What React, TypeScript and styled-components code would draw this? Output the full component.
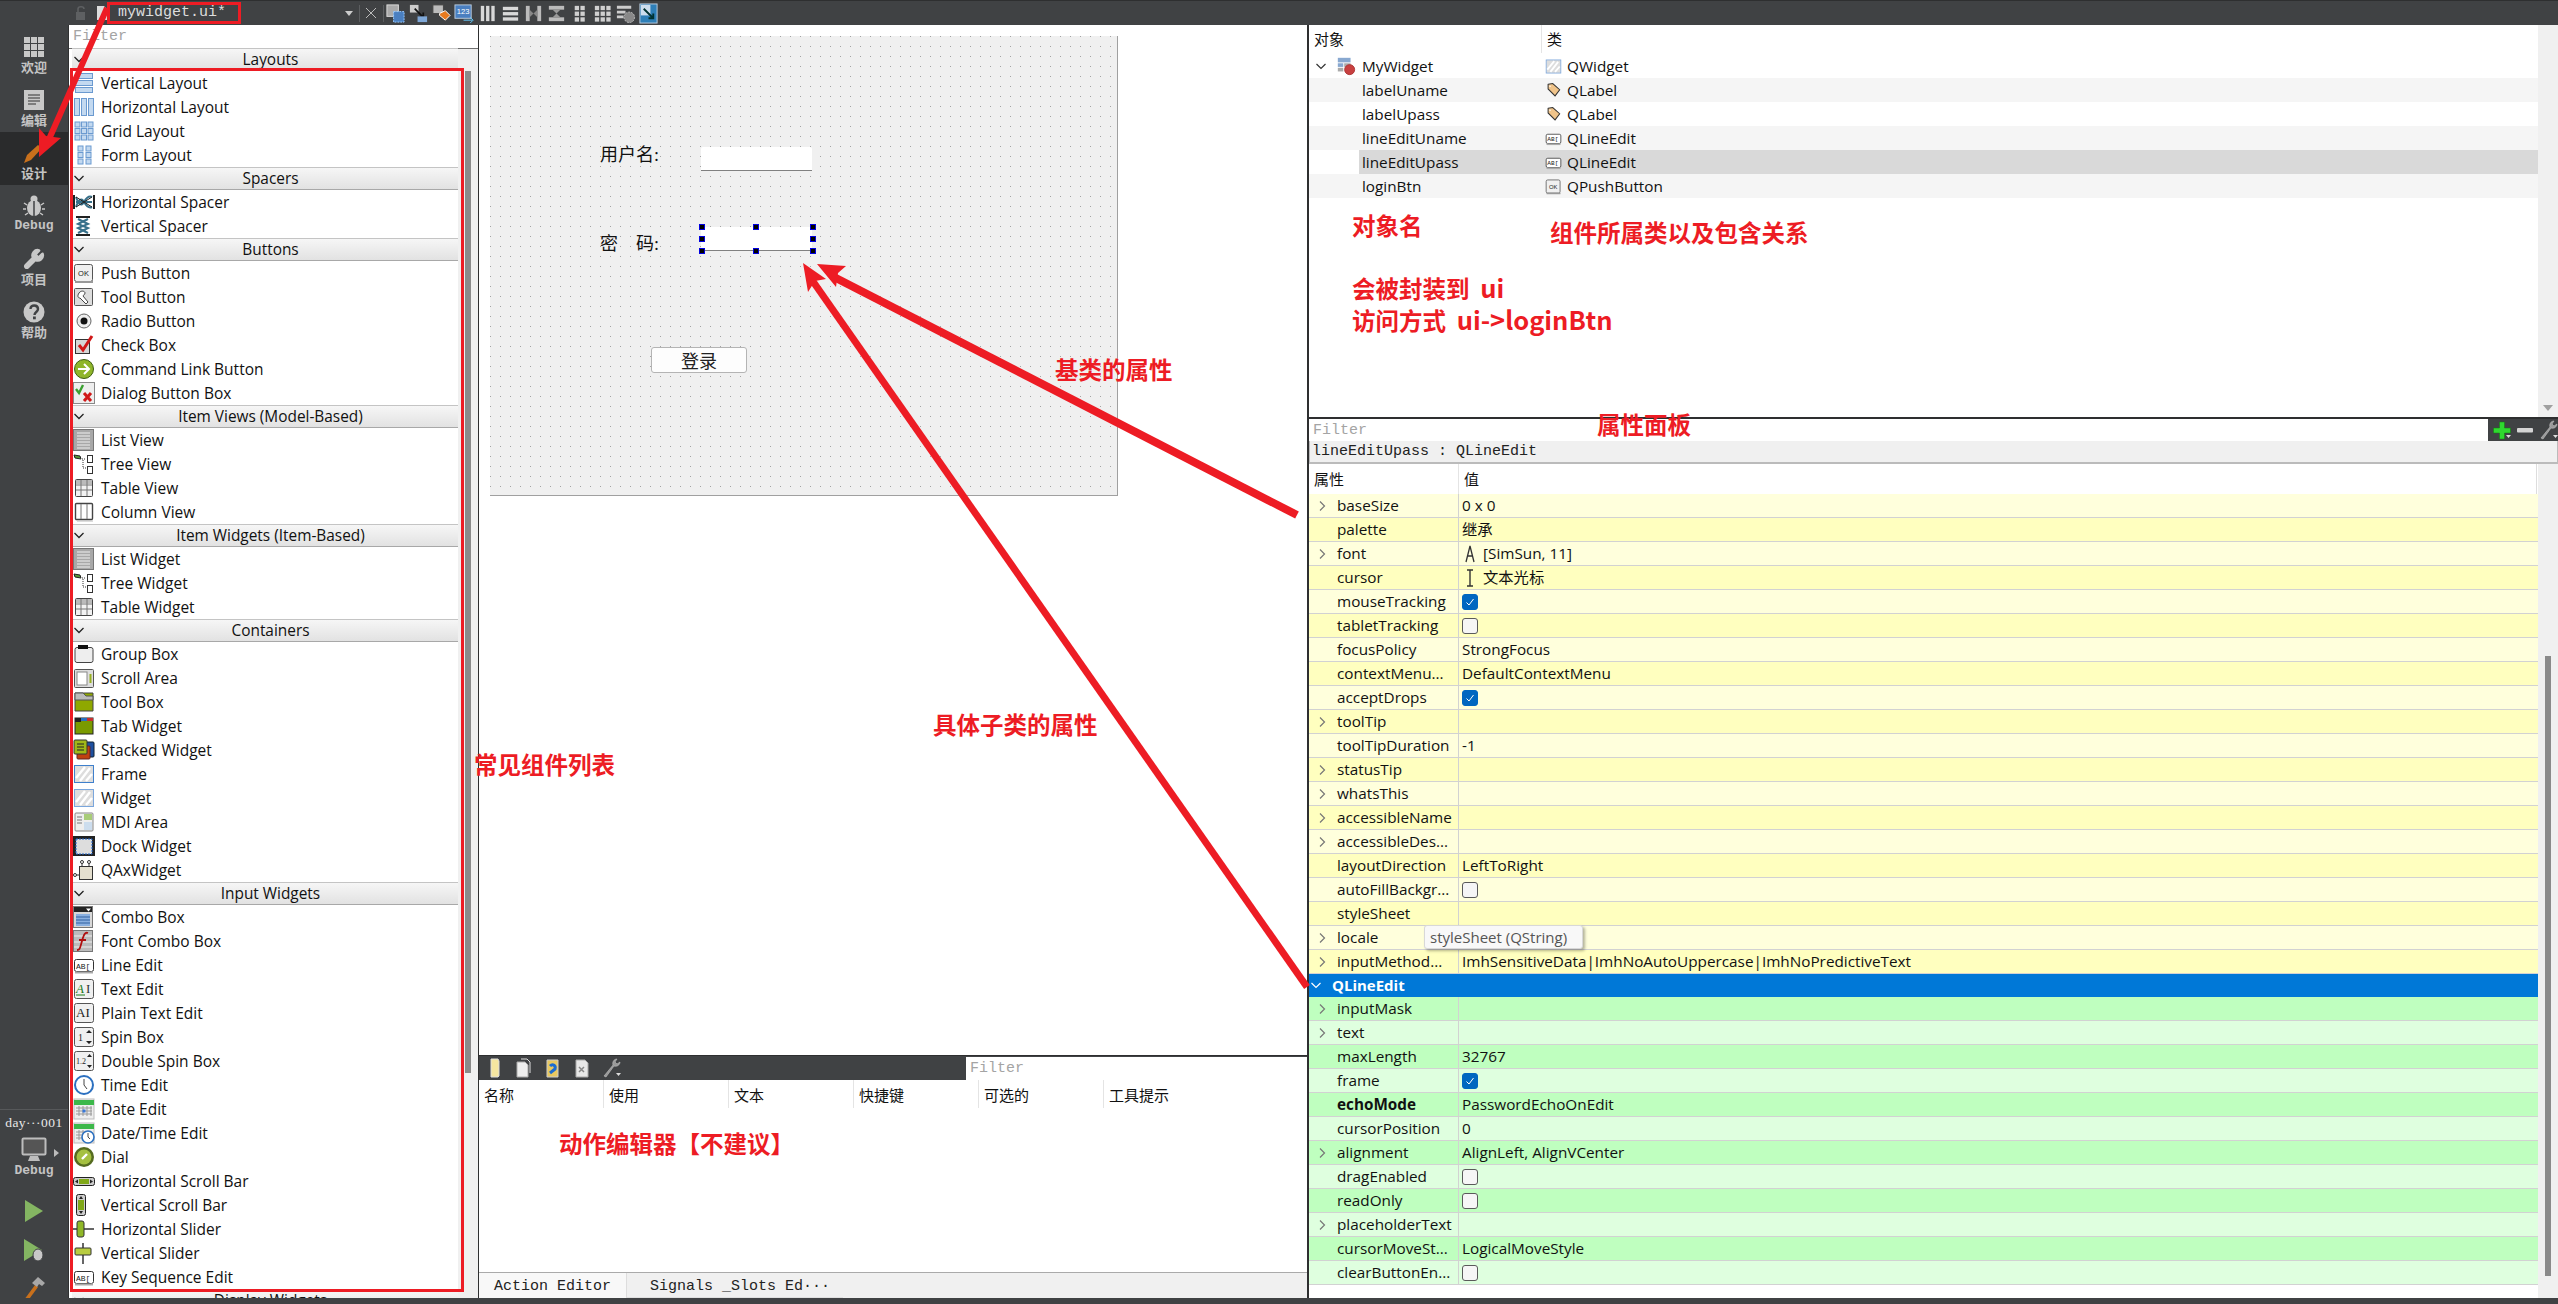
import React from "react";
import styled, { createGlobalStyle } from "styled-components";
import { Wrench } from "lucide-react";

const UI = `"Open Sans", "Noto Sans CJK SC", sans-serif`;
const MONO = `"Liberation Mono", "Noto Sans CJK SC", monospace`;
const CJK = `"Noto Sans CJK SC", "Open Sans", sans-serif`;
const SERIF = `"Liberation Serif", "Noto Sans CJK SC", serif`;
const RED = "#ed1c24";

const Global = createGlobalStyle`
  html, body { margin: 0; padding: 0; background: #404244; }
  * { box-sizing: border-box; }
`;

const Root = styled.div`
  position: relative; width: 2558px; height: 1304px; overflow: hidden;
  display: flex; flex-direction: column; background: #404244; font-family: ${UI}; color: #111;
`;
const TopBar = styled.div`
  height: 25px; flex: none; display: flex; align-items: center; padding-left: 75px;
  background: #404244; border-top: 1px solid #2e2f30;
`;
const Title = styled.div`
  width: 134px; height: 22px; margin-left: 0; border: 3px solid ${RED};
  font: 15px/16px ${MONO}; color: #ddd; padding-left: 8px;
`;
const TopGap = styled.span`display: inline-block; width: ${(p: { $w: number }) => p.$w}px; flex: none;`;
const DropCaret = styled.span`
  width: 0; height: 0; border: 4px solid transparent; border-top: 5px solid #ccc; border-bottom: 0; flex: none;
`;
const TopDivider = styled.span`width: 1px; height: 17px; background: #5c5e60; flex: none;`;
const ToolSlot = styled.span`width: 23px; height: 22px; display: flex; align-items: center; justify-content: center; flex: none;`;

const Main = styled.div`flex: 1; min-height: 0; display: flex;`;
const BottomStrip = styled.div`height: 6px; flex: none; background: #404244;`;

/* sidebar */
const Sidebar = styled.div`
  width: 69px; flex: none; display: flex; flex-direction: column; padding-top: 1px;
  background: #404244; border-right: 1px solid #303132;
`;
const ModeTab = styled.div<{ $on?: boolean }>`
  height: 53px; flex: none; display: flex; flex-direction: column; align-items: center; justify-content: flex-start;
  padding-top: 10px; background: ${(p) => (p.$on ? "#2a2b2c" : "transparent")};
`;
const ModeLabel = styled.div<{ $mono?: boolean }>`
  margin-top: 1px; font: bold 13px/16px ${(p) => (p.$mono ? MONO : CJK)}; color: #c4c4c4;
`;
const SideBottom = styled.div`
  margin-top: auto; height: 189px; border-top: 1px solid #56585a; display: flex; flex-direction: column; align-items: center;
`;
const KitName = styled.div`font: 13.5px/16px ${SERIF}; color: #e8e8e8; margin-top: 5px; letter-spacing: .5px;`;
const KitMonitor = styled.div`position: relative; margin-top: 6px; width: 68px; display: flex; justify-content: center;`;
const KitCaret = styled.span`
  position: absolute; left: 54px; top: 12px; width: 0; height: 0;
  border: 4px solid transparent; border-left: 5px solid #bbb; border-right: 0;
`;
const RunBtn = styled.div<{ $top: number }>`
  height: 24px; margin-top: ${(p) => p.$top}px; display: flex; align-items: center; justify-content: center; flex: none;
`;

/* widget box */
const LeftPanel = styled.div`width: 409px; flex: none; display: flex; flex-direction: column; background: #fff;`;
const FilterInput = styled.div<{ $w?: number }>`
  height: 23px; flex: ${(p) => (p.$w ? "none" : "1")}; ${(p) => (p.$w ? `width:${p.$w}px;` : "")}
  background: #fff; font: 15px/23px ${MONO}; color: #a4a4a4; padding-left: 4px; min-width: 0;
`;
const LeftFilterRow = styled.div`display: flex; flex: none; border-bottom: 1px solid #707070;`;
const BoxBody = styled.div`flex: 1; min-height: 0; display: flex;`;
const BoxList = styled.div`flex: 1; min-width: 0; overflow: hidden; padding-left: 3px; margin-top: -1px;`;
const Category = styled.div`
  position: relative; height: 23px; display: flex; align-items: center; justify-content: center; padding-left: 11px;
  font-size: 15.4px; background: linear-gradient(#f6f6f6, #e2e2e2); border-bottom: 1px solid #a8a8a8; border-top: 1px solid #c4c4c4;
`;
const CatChevron = styled.svg`position: absolute; left: 1px; top: 4px;`;
const Item = styled.div`
  height: 24px; display: flex; align-items: center; gap: 6px; padding-left: 1px; font-size: 15.5px; white-space: nowrap;
`;
const ScrollTrack = styled.div`
  width: 20px; flex: none; background: #f0f0f0; position: relative;
`;
const ScrollThumb = styled.div<{ $top: number; $h: number }>`
  position: absolute; left: 7px; width: 6px; top: ${(p) => p.$top}px; height: ${(p) => p.$h}px; background: #8a8a8a;
`;
const DownArrow = styled.span`
  position: absolute; left: 5px; bottom: 6px; width: 0; height: 0;
  border: 5px solid transparent; border-top: 6px solid #a0a0a0; border-bottom: 0;
`;

/* center */
const Splitter = styled.div<{ $w: number }>`width: ${(p) => p.$w}px; flex: none; background: #2e2f30;`;
const Center = styled.div`width: 828px; flex: none; display: flex; flex-direction: column; background: #fff;`;
const Canvas = styled.div`height: 1030px; flex: none; padding: 11px 0 0 11px;`;
const Form = styled.div`
  position: relative; width: 628px; height: 460px;
  background-color: #f0f0f0;
  border-right: 1px solid #a0a0a0; border-bottom: 1px solid #a0a0a0;
  &::before {
    content: ""; position: absolute; inset: 0;
    background: linear-gradient(to right, #a4a4a4 1px, transparent 1px) 0 0 / 10px 10px;
    -webkit-mask: linear-gradient(to bottom, #000 1px, transparent 1px) 0 0 / 10px 10px;
    mask: linear-gradient(to bottom, #000 1px, transparent 1px) 0 0 / 10px 10px;
  }
`;
const FormLabel = styled.div<{ $x: number; $y: number }>`
  position: absolute; left: ${(p) => p.$x}px; top: ${(p) => p.$y}px; font: 18px/24px ${SERIF}; color: #111; white-space: pre;
`;
const LineEdit = styled.div<{ $x: number; $y: number }>`
  position: absolute; left: ${(p) => p.$x}px; top: ${(p) => p.$y}px; width: 111px; height: 24px;
  background: #fff; border-bottom: 1px solid #808080; border-radius: 2px 2px 0 0;
`;
const Handle = styled.div<{ $x: number; $y: number }>`
  position: absolute; left: ${(p) => p.$x}px; top: ${(p) => p.$y}px; width: 6px; height: 6px;
  background: #000; border: 1px solid #0000e0;
`;
const FormButton = styled.div`
  position: absolute; left: 161px; top: 311px; width: 96px; height: 26px; background: #fdfdfd; border: 1px solid #b4b4b4; border-radius: 3px;
  display: flex; align-items: center; justify-content: center; font: 18px ${SERIF}; color: #222;
`;
const ActionBar = styled.div`
  height: 25px; flex: none; display: flex; align-items: center; background: #404244; border-top: 1px solid #2e2f30; padding-left: 5px;
`;
const ActionTools = styled.div`flex: 1; display: flex; align-items: center; gap: 7px;`;
const ColumnHeader = styled.div`height: 29px; flex: none; display: flex;`;
const ColHead = styled.div`
  width: 125px; flex: none; border-right: 1px solid #e4e4e4; font: 15px/29px ${CJK}; padding-left: 5px; height: 28px;
  &:last-child { border-right: 0; }
`;
const ActionBody = styled.div`flex: 1;`;
const Tabs = styled.div`
  height: 26px; flex: none; display: flex; background: #f0f0f0; border-top: 1px solid #aaa;
`;
const TabItem = styled.div<{ $on?: boolean; $w: number }>`
  width: ${(p) => p.$w}px; font: 15px/27px ${MONO}; padding-left: ${(p) => (p.$on ? 15 : 23)}px; color: #222; white-space: pre;
  background: ${(p) => (p.$on ? "#f8f8f8" : "#f0f0f0")}; ${(p) => (p.$on ? "border-right: 1px solid #ddd;" : "border-bottom: 1px solid #e0e0e0;")}
`;

/* right */
const Right = styled.div`flex: 1; min-width: 0; display: flex; flex-direction: column; background: #fff;`;
const ObjectArea = styled.div`height: 392px; flex: none; display: flex;`;
const ObjectTree = styled.div`flex: 1; min-width: 0;`;
const TreeHead = styled.div`height: 29px; display: grid; grid-template-columns: 233px 1fr; font: 15px/28px ${CJK};`;
const TreeHeadCell = styled.div`padding-left: 5px; height: 28px; &:first-child { border-right: 1px solid #e4e4e4; }`;
const TreeRow = styled.div<{ $alt?: boolean }>`
  height: 24px; display: grid; grid-template-columns: 50px 183px 1fr; font-size: 15.3px; line-height: 24px;
  background: ${(p) => (p.$alt ? "#f5f5f5" : "#fff")}; white-space: nowrap;
`;
const TreeIndent = styled.div`display: flex; align-items: center; padding-left: 6px; gap: 9px;`;
const TreeName = styled.div<{ $sel?: boolean }>`
  padding-left: 3px; background: ${(p) => (p.$sel ? "#d9d9d9" : "transparent")};
`;
const TreeClass = styled.div<{ $sel?: boolean }>`
  display: flex; align-items: center; gap: 5px; padding-left: 3px; background: ${(p) => (p.$sel ? "#d9d9d9" : "transparent")};
`;
const FilterRow = styled.div`
  height: 24px; flex: none; display: flex; border-top: 2px solid #2e2f30; border-bottom: 1px solid #404244; background: #404244;
`;
const FilterTools = styled.div`width: 70px; flex: none; display: flex; align-items: center; padding-left: 3px; gap: 1px;`;
const ObjTitle = styled.div`
  height: 23px; flex: none; background: #f0f0f0; border: 1px solid #bbb; border-top: 0;
  font: 15px/21px ${MONO}; padding-left: 2px; color: #222; border-bottom-width: 2px;
`;
const PropArea = styled.div`flex: 1; min-height: 0; display: flex;`;
const PropTable = styled.div`flex: 1; min-width: 0;`;
const PropHead = styled.div`
  height: 30px; display: grid; grid-template-columns: 150px 1fr; font: 15px/30px ${CJK}; border-right: 1px solid #ddd; margin-right: 1px;
`;
const PropHeadCell = styled.div`padding-left: 5px; &:first-child { border-right: 1px solid #e4e4e4; }`;
const PropRow = styled.div<{ $bg: string }>`
  height: 24px; display: grid; grid-template-columns: 150px 1fr; background: ${(p) => p.$bg};
  border-bottom: 1px solid #d2d2d2; font-size: 15.3px; line-height: 23px; white-space: nowrap;
`;
const PropName = styled.div<{ $bold?: boolean }>`
  position: relative; padding-left: 28px; border-right: 1px solid #d2d2d2; overflow: hidden; font-weight: ${(p) => (p.$bold ? 700 : 400)};
`;
const PropChevron = styled.svg`position: absolute; left: 7px; top: 6px;`;
const PropValue = styled.div`padding-left: 3px; display: flex; align-items: center; gap: 5px;`;
const GroupRow = styled.div`
  position: relative; height: 23px; background: #0078d7; color: #fff; font: 700 15px/22px ${UI}; padding-left: 23px;
`;
const Check = styled.span<{ $on?: boolean }>`
  width: 16px; height: 16px; flex: none; border-radius: 3px; display: inline-flex; align-items: center; justify-content: center;
  background: ${(p) => (p.$on ? "#0067c0" : "#f6f6f6")}; border: 1px solid ${(p) => (p.$on ? "#0067c0" : "#5a5a5a")};
`;
const Tip = styled.div`
  position: absolute; left: 1424px; top: 925px; width: 159px; height: 24px; background: #f8f8f8; border: 1px solid #d8d8d8; border-radius: 3px;
  font: 15px/22px ${UI}; color: #555; padding-left: 5px; box-shadow: 2px 2px 3px rgba(0,0,0,.3); white-space: nowrap;
`;

/* overlay annotations */
const Overlay = styled.svg`position: absolute; left: 0; top: 0; pointer-events: none;`;
const RedFrame = styled.div`
  position: absolute; left: 70px; top: 68px; width: 394px; height: 1224px; border: 3px solid ${RED}; pointer-events: none;
`;
const Note = styled.div<{ $x: number; $y: number }>`
  position: absolute; left: ${(p) => p.$x}px; top: ${(p) => p.$y}px; color: ${RED}; white-space: pre;
  font: 700 23.5px/32px ${CJK};
`;
const NoteLatin = styled.span`font-size: 25.5px;`;

/* ---------- drawn icons ---------- */
const icons: Record<string, React.ReactNode> = {
  vlayout: <g fill="#c3d9f0" stroke="#6b9ad0"><rect x="2.5" y="1.5" width="17" height="5" /><rect x="2.5" y="8.5" width="17" height="5" /><rect x="2.5" y="15.5" width="17" height="5" /></g>,
  hlayout: <g fill="#c3d9f0" stroke="#6b9ad0"><rect x="1.5" y="2.5" width="5" height="17" /><rect x="8.5" y="2.5" width="5" height="17" /><rect x="15.5" y="2.5" width="5" height="17" /></g>,
  grid: <g fill="#c3d9f0" stroke="#6b9ad0">{[2, 8.5, 15].map((x) => [2, 8.5, 15].map((y) => <rect key={x + "-" + y} x={x} y={y} width="5" height="5" />))}</g>,
  form: <g fill="#c3d9f0" stroke="#6b9ad0">{[5, 13].map((x) => [2, 8.5, 15].map((y) => <rect key={x + "-" + y} x={x} y={y} width="5" height="5" />))}</g>,
  hspacer: <g><path d="M1 4v14M21 4v14" stroke="#222" strokeWidth="2" /><path d="M3 6q4 12 8 5t8-5M3 16q4-12 8-5t8 5M3 11h16" stroke="#37708a" strokeWidth="2" fill="none" /><path d="M3 6l16 10M3 16L19 6" stroke="#222" /></g>,
  vspacer: <g><path d="M3 2h14M3 20h14" stroke="#222" strokeWidth="2" /><path d="M5 4l10 5-10 4 10 5M15 4L5 9l10 4-10 5" stroke="#37708a" strokeWidth="2" fill="none" /></g>,
  push: <g><rect x="1.5" y="2.5" width="18" height="17" rx="2" fill="#f0f0f0" stroke="#555" /><path d="M2 20h18" stroke="#999" strokeWidth="2" /><text x="10.5" y="14" fontSize="7.5" textAnchor="middle" fontFamily="Liberation Sans" fill="#222">OK</text></g>,
  tool: <g><rect x="1.5" y="2.5" width="18" height="17" rx="1" fill="#ddd" stroke="#555" /><path d="M6 7c2-3 6-2 6 0s-2 2-2 3l5 6-2 2-6-6c-2 0-3-2-1-5z" fill="#fff" stroke="#444" /></g>,
  radio: <g><circle cx="11" cy="11" r="7" fill="#eee" stroke="#666" /><circle cx="11" cy="11" r="3.5" fill="#111" /></g>,
  check: <g><rect x="2.5" y="5.5" width="14" height="14" fill="#d6d6d6" stroke="#333" /><path d="M6 11l4 5 9-14" stroke="#d01818" strokeWidth="3" fill="none" /></g>,
  command: <g><circle cx="11" cy="11" r="9.5" fill="#8fb52a" stroke="#3e5e10" /><path d="M5 11h10M11 6l5 5-5 5" stroke="#fff" strokeWidth="2" fill="none" /></g>,
  dialog: <g><rect x="0.5" y="0.5" width="21" height="21" fill="#eee" stroke="#888" /><path d="M3 7l3 4 4-8" stroke="#3aa030" strokeWidth="2.4" fill="none" /><path d="M11 11l7 8M18 11l-7 8" stroke="#d01818" strokeWidth="3" /></g>,
  list: <g><rect x="0.5" y="0.5" width="20" height="21" fill="#a8a8a8" stroke="#777" /><path d="M4 4h13M4 7h13M4 10h13M4 13h13M4 16h13M4 19h13" stroke="#f0f0f0" /></g>,
  tree: <g><path d="M1 2l6 1 1 3-6-1z" fill="#5a9a3c" stroke="#222" /><path d="M9 6h3M10 7v8h3" stroke="#333" strokeDasharray="1 1" fill="none" /><rect x="14.5" y="2.5" width="5" height="7" fill="#fff" stroke="#333" /><rect x="14.5" y="13.5" width="5" height="7" fill="#fff" stroke="#333" /></g>,
  table: <g><rect x="2.5" y="2.5" width="17" height="17" rx="1" fill="#f2f2f2" stroke="#444" /><rect x="3" y="3" width="16" height="4" fill="#bbb" /><path d="M3 8h16M3 13h16M8 3v16M14 3v16" stroke="#777" /></g>,
  column: <g><rect x="2.5" y="2.5" width="17" height="16" rx="1" fill="#fff" stroke="#444" strokeWidth="1.4" /><path d="M8 3v15M14 3v15" stroke="#777" /><path d="M4 20h16" stroke="#bbb" /></g>,
  group: <g><rect x="2" y="4.5" width="18" height="15" rx="2" fill="#eee" stroke="#444" /><rect x="5" y="2" width="10" height="4" fill="#111" /></g>,
  scroll: <g><rect x="1.5" y="2.5" width="19" height="18" rx="1" fill="#ddd" stroke="#555" /><rect x="4" y="5" width="10" height="13" fill="#fff" stroke="#888" /><rect x="16.5" y="7" width="2" height="9" fill="#98b020" /></g>,
  toolbox: <g><path d="M2 2h18v18H2z" fill="#8fa800" stroke="#444" /><path d="M2 2h8l3 3h7v4H2z" fill="#bbb" stroke="#555" /></g>,
  tab: <g><rect x="2" y="3" width="18" height="16" fill="#7a9a00" stroke="#222" /><rect x="2" y="3" width="6" height="4" fill="#222" /><rect x="8" y="3" width="6" height="3" fill="#2a70c0" /><rect x="14" y="3" width="6" height="3" fill="#c83030" /></g>,
  stacked: <g><rect x="9" y="3" width="12" height="15" rx="1" fill="#1e50a0" stroke="#123" /><rect x="4" y="7" width="13" height="13" rx="1" fill="#c04010" stroke="#622" /><rect x="1" y="1" width="13" height="14" rx="1" fill="#a0b818" stroke="#333" /><path d="M4 5h7M4 8h7M4 11h7" stroke="#222" /></g>,
  frame: <g><rect x="1.5" y="2.5" width="19" height="17" fill="#ddd" stroke="#3f80cc" /><path d="M3 15L12 4M7 18l10-13M13 18l6-7" stroke="#fff" strokeWidth="2.4" /></g>,
  widget: <g><rect x="1.5" y="2.5" width="19" height="17" fill="#ddd" stroke="#7aa6dc" /><path d="M3 15L12 4M7 18l10-13M13 18l6-7" stroke="#fff" strokeWidth="2.4" /></g>,
  mdi: <g><rect x="2" y="2" width="18" height="18" rx="1" fill="#eee" stroke="#888" /><rect x="11" y="3" width="8" height="6" fill="#a8cc78" /><rect x="11" y="11" width="8" height="8" fill="#cde" /><path d="M4 6h5M4 9h5M4 12h5" stroke="#777" /></g>,
  dock: <g><rect x="0" y="1" width="22" height="20" fill="#222" /><rect x="3" y="4" width="16" height="15" fill="#ddd" stroke="#26c" strokeDasharray="2 1" /></g>,
  qax: <g><rect x="6.5" y="7.5" width="13" height="13" fill="#e4dfcf" stroke="#333" /><path d="M9 8V3M16 8V3M6 16H3" stroke="#333" /><circle cx="9" cy="3" r="1.5" fill="#fff" stroke="#333" /><circle cx="16" cy="3" r="1.5" fill="#fff" stroke="#333" /><circle cx="2" cy="16" r="1.5" fill="#fff" stroke="#333" /></g>,
  combo: <g><rect x="0.5" y="0.5" width="19" height="21" fill="#d8d8d8" stroke="#777" /><rect x="1" y="1" width="18" height="5" fill="#222" /><path d="M13 2.5h5l-2.5 3z" fill="#fff" /><rect x="3" y="8" width="14" height="12" fill="#8ab0e0" /><path d="M3 11h14M3 14h14M3 17h14" stroke="#3060a0" /></g>,
  fontcombo: <g><rect x="0.5" y="0.5" width="19" height="21" fill="#bbb" stroke="#777" /><path d="M1 6h18M1 12h18M1 17h18" stroke="#eee" /><path d="M4 20c3 0 3-2 5-9s3-9 6-8M6 10h7" stroke="#b01010" strokeWidth="1.8" fill="none" /></g>,
  lineedit: <g><rect x="1.5" y="5.5" width="19" height="12" rx="2" fill="#fff" stroke="#333" /><path d="M2 18.5h18" stroke="#aaa" strokeWidth="2" /><text x="3" y="14.5" fontSize="8" fontFamily="Liberation Mono" fill="#222">AB[</text></g>,
  textedit: <g><rect x="1.5" y="1.5" width="19" height="19" rx="2" fill="#f0f0f0" stroke="#555" /><text x="3" y="15" fontSize="13" fontFamily="Liberation Serif" fontStyle="italic" fill="#1a7a1a">A</text><text x="13" y="15" fontSize="13" fontFamily="Liberation Serif" fill="#333">I</text><path d="M3 17h9" stroke="#1a7a1a" /></g>,
  plain: <g><rect x="1.5" y="1.5" width="19" height="19" rx="2" fill="#f0f0f0" stroke="#555" /><text x="3" y="15" fontSize="13" fontFamily="Liberation Serif" fill="#222">AI</text></g>,
  spin: <g><rect x="1.5" y="1.5" width="19" height="19" rx="2" fill="#f0f0f0" stroke="#555" /><text x="5" y="15" fontSize="10" fontFamily="Liberation Serif" fill="#222">1</text><path d="M13 7l3-3 3 3zM13 15l3 3 3-3z" fill="#222" /></g>,
  dspin: <g><rect x="1.5" y="1.5" width="19" height="19" rx="2" fill="#f0f0f0" stroke="#555" /><text x="3" y="14" fontSize="8" fontFamily="Liberation Serif" fill="#222">1.2</text><path d="M14 7l2.5-3 2.5 3zM14 15l2.5 3 2.5-3z" fill="#222" /></g>,
  time: <g><circle cx="11" cy="11" r="9" fill="#fff" stroke="#2c70c0" strokeWidth="2" /><path d="M11 5v6l3 4" stroke="#444" fill="none" /></g>,
  date: <g><rect x="1" y="1" width="20" height="20" fill="#eee" stroke="#bbb" /><rect x="1" y="2" width="20" height="5" fill="#3cb84a" /><path d="M3 10h16M3 13h16M3 16h16M6 8v10M10 8v10M14 8v10M18 8v10" stroke="#999" /><rect x="9.5" y="11.5" width="3" height="3" fill="#3878d8" /></g>,
  datetime: <g><rect x="1" y="1" width="20" height="20" fill="#eee" stroke="#bbb" /><rect x="1" y="2" width="20" height="5" fill="#3cb84a" /><path d="M3 10h16M3 13h16M3 16h16M6 8v10M10 8v10" stroke="#999" /><circle cx="15" cy="15" r="6" fill="#fff" stroke="#2c70c0" strokeWidth="1.6" /><path d="M15 11v4l2 2" stroke="#444" fill="none" /></g>,
  dial: <g><circle cx="11" cy="11" r="10" fill="#556b20" /><circle cx="11" cy="11" r="7.5" fill="#a4c040" /><path d="M9 13l5-5" stroke="#fff" strokeWidth="2.4" /></g>,
  hscroll: <g><rect x="0.5" y="7.5" width="21" height="8" rx="2" fill="#ccc" stroke="#222" /><rect x="6" y="9" width="10" height="5" fill="#80a818" /><path d="M2 11.5l3-2v4zM20 11.5l-3-2v4z" fill="#222" /></g>,
  vscroll: <g><rect x="3.5" y="0.5" width="9" height="21" rx="2" fill="#ccc" stroke="#222" /><rect x="5" y="6" width="6" height="10" fill="#80a818" /><path d="M8 2l-2 3h4zM8 20l-2-3h4z" fill="#222" /></g>,
  hslider: <g><path d="M0 11h21" stroke="#333" strokeWidth="1.5" /><rect x="4" y="3" width="7" height="16" rx="2" fill="#90b828" stroke="#333" /></g>,
  vslider: <g><path d="M10 1v21" stroke="#333" strokeWidth="1.5" /><rect x="2" y="6" width="16" height="7" rx="1" fill="#b8cc40" stroke="#333" /></g>,
  // tool bar icons
  t_widget: <g><rect x="2" y="2" width="12" height="12" fill="#aaa" stroke="#ddd" /><rect x="9" y="9" width="11" height="11" fill="#4a7fc0" strokeDasharray="2 1" stroke="#9cf" /></g>,
  t_signal: <g><rect x="2" y="2" width="9" height="8" fill="#ccc" /><path d="M7 6l9 9M16 10v5h-5" stroke="#111" strokeWidth="1.8" fill="none" /><rect x="10" y="14" width="10" height="6" fill="#7fa8d8" /></g>,
  t_buddy: <g><rect x="2" y="2" width="11" height="9" fill="#bbb" stroke="#444" /><path d="M9 11l6-3 5 5-5 5-6-5z" fill="#e87a1e" stroke="#fff" /></g>,
  t_tab: <g><rect x="1" y="2" width="17" height="14" fill="#4a7fc0" stroke="#bcd" /><text x="3" y="12" fontSize="8" fontFamily="Liberation Sans" fill="#fff">123</text><path d="M10 18h9M17 15l3 3-3 3" stroke="#6cf" fill="none" /></g>,
  t_h: <g fill="#d8d8d8"><rect x="4" y="3" width="3.5" height="16" /><rect x="9.5" y="3" width="3.5" height="16" /><rect x="15" y="3" width="3.5" height="16" /></g>,
  t_v: <g fill="#d8d8d8"><rect x="3" y="4" width="16" height="3.5" /><rect x="3" y="9.5" width="16" height="3.5" /><rect x="3" y="15" width="16" height="3.5" /></g>,
  t_hs: <g fill="#bbb"><rect x="3" y="3" width="4" height="16" /><rect x="15" y="3" width="4" height="16" /><path d="M7 7l4 4 4-4v8l-4-4-4 4z" fill="#888" /></g>,
  t_vs: <g fill="#bbb"><rect x="3" y="3" width="16" height="4" /><rect x="3" y="15" width="16" height="4" /><path d="M7 7l4 4 4-4zM7 15l4-4 4 4z" fill="#999" /></g>,
  t_form: <g fill="#d0d0d0">{[6, 12].map((x) => [3, 9, 15].map((y) => <rect key={x + "-" + y} x={x} y={y} width="4.5" height="4.5" />))}</g>,
  t_grid: <g fill="#d0d0d0">{[3, 9, 15].map((x) => [3, 9, 15].map((y) => <rect key={x + "-" + y} x={x} y={y} width="4.5" height="4.5" />))}</g>,
  t_break: <g><path d="M2 3h15v3H2zM2 8h9v3H2zM2 13h7v3H2z" fill="#ccc" /><circle cx="15" cy="15" r="5.5" fill="#888" stroke="#bbb" strokeDasharray="2 1" /></g>,
  t_adjust: <g><rect x="2" y="1" width="18" height="20" fill="#2e7fb8" stroke="#bcd" /><rect x="3" y="2" width="10" height="11" fill="#cde" /><path d="M6 6l10 10M16 11v5h-5" stroke="#033" strokeWidth="2" fill="none" /></g>,
  // action bar
  a_new: <g><path d="M7 2h7l1 2v15l-1 1H7z" fill="#f5e6a0" stroke="#ddd" /></g>,
  a_copy: <g><path d="M4 5h8l3 3v12H4z" fill="#eee" stroke="#aaa" /><path d="M8 2h6l3 3v11" fill="none" stroke="#ddd" /></g>,
  a_open: <g><path d="M5 3h11v17H5z" fill="#e8c860" stroke="#ccc" /><path d="M8 9c3-3 6 0 5 3l-5 4" stroke="#1c6cd0" strokeWidth="3" fill="none" /></g>,
  a_del: <g><path d="M5 3h9l3 3v14H5z" fill="#e8e8e8" stroke="#aaa" /><path d="M8 10l5 5M13 10l-5 5" stroke="#888" strokeWidth="1.5" /></g>,
  a_wrench: <g><path d="M4 19L13 8c-1-3 1-6 4-6l-2 3 2 2 3-2c0 3-3 5-6 4L6 20z" fill="#999" stroke="#ccc" strokeWidth=".5" /><path d="M16 16h5l-2.5 3z" fill="#ddd" /></g>,
  p_plus: <g><path d="M8.5 3h5v6h6v5h-6v6h-5v-6h-6V9h6z" fill="#2fd82f" stroke="#107a10" strokeWidth=".5" /><path d="M15 16h5l-2.5 3z" fill="#ddd" /></g>,
  p_minus: <g><rect x="3" y="9" width="16" height="4.5" rx="1" fill="#d4d4d4" /></g>,
  // tree
  o_form: <g><rect x="2" y="2" width="14" height="5" fill="#88a8d0" /><rect x="2" y="8" width="6" height="4" fill="#88a8d0" /><rect x="9" y="8" width="7" height="4" fill="#aaa" /><rect x="2" y="13" width="6" height="4" fill="#aaa" /><circle cx="15" cy="15" r="5.5" fill="#c84040" stroke="#a33" /></g>,
  o_label: <g><path d="M4 3l6-1 9 8-6 8-9-9z" fill="#f0c48a" stroke="#333" strokeWidth="1.3" /><circle cx="6.5" cy="5.5" r="1" fill="#fff" /></g>,
};

const Ic = ({ n, s = 22 }: { n: string; s?: number }) => (
  <svg width={s} height={s} viewBox="0 0 22 22" style={{ flex: "none" }}>{icons[n]}</svg>
);

const Chevron = ({ open, c = "#333" }: { open?: boolean; c?: string }) => (
  <svg width="12" height="12" viewBox="0 0 12 12" style={{ flex: "none" }}>
    <path d={open ? "M1.5 4l4.5 4.5L10.5 4" : "M4 1.5L8.5 6 4 10.5"} fill="none" stroke={c} strokeWidth="1.2" />
  </svg>
);

/* ---------- data ---------- */
const box: [string, [string, string][]][] = [
  ["Layouts", [["vlayout", "Vertical Layout"], ["hlayout", "Horizontal Layout"], ["grid", "Grid Layout"], ["form", "Form Layout"]]],
  ["Spacers", [["hspacer", "Horizontal Spacer"], ["vspacer", "Vertical Spacer"]]],
  ["Buttons", [["push", "Push Button"], ["tool", "Tool Button"], ["radio", "Radio Button"], ["check", "Check Box"], ["command", "Command Link Button"], ["dialog", "Dialog Button Box"]]],
  ["Item Views (Model-Based)", [["list", "List View"], ["tree", "Tree View"], ["table", "Table View"], ["column", "Column View"]]],
  ["Item Widgets (Item-Based)", [["list", "List Widget"], ["tree", "Tree Widget"], ["table", "Table Widget"]]],
  ["Containers", [["group", "Group Box"], ["scroll", "Scroll Area"], ["toolbox", "Tool Box"], ["tab", "Tab Widget"], ["stacked", "Stacked Widget"], ["frame", "Frame"], ["widget", "Widget"], ["mdi", "MDI Area"], ["dock", "Dock Widget"], ["qax", "QAxWidget"]]],
  ["Input Widgets", [["combo", "Combo Box"], ["fontcombo", "Font Combo Box"], ["lineedit", "Line Edit"], ["textedit", "Text Edit"], ["plain", "Plain Text Edit"], ["spin", "Spin Box"], ["dspin", "Double Spin Box"], ["time", "Time Edit"], ["date", "Date Edit"], ["datetime", "Date/Time Edit"], ["dial", "Dial"], ["hscroll", "Horizontal Scroll Bar"], ["vscroll", "Vertical Scroll Bar"], ["hslider", "Horizontal Slider"], ["vslider", "Vertical Slider"], ["lineedit", "Key Sequence Edit"]]],
  ["Display Widgets", []],
];

type P = { n: string; v?: string; x?: boolean; c?: boolean; k?: string; b?: boolean };
const baseProps: P[] = [
  { n: "baseSize", v: "0 x 0", x: true }, { n: "palette", v: "继承" }, { n: "font", v: "[SimSun, 11]", x: true, k: "font" },
  { n: "cursor", v: "文本光标", k: "cursor" }, { n: "mouseTracking", c: true }, { n: "tabletTracking", c: false },
  { n: "focusPolicy", v: "StrongFocus" }, { n: "contextMenu...", v: "DefaultContextMenu" }, { n: "acceptDrops", c: true },
  { n: "toolTip", x: true }, { n: "toolTipDuration", v: "-1" }, { n: "statusTip", x: true }, { n: "whatsThis", x: true },
  { n: "accessibleName", x: true }, { n: "accessibleDes...", x: true }, { n: "layoutDirection", v: "LeftToRight" },
  { n: "autoFillBackgr...", c: false }, { n: "styleSheet" }, { n: "locale", x: true },
  { n: "inputMethod...", v: "ImhSensitiveData|ImhNoAutoUppercase|ImhNoPredictiveText", x: true },
];
const editProps: P[] = [
  { n: "inputMask", x: true }, { n: "text", x: true }, { n: "maxLength", v: "32767" }, { n: "frame", c: true },
  { n: "echoMode", v: "PasswordEchoOnEdit", b: true }, { n: "cursorPosition", v: "0" },
  { n: "alignment", v: "AlignLeft, AlignVCenter", x: true }, { n: "dragEnabled", c: false }, { n: "readOnly", c: false },
  { n: "placeholderText", x: true }, { n: "cursorMoveSt...", v: "LogicalMoveStyle" }, { n: "clearButtonEn...", c: false },
];

const Prop = ({ p, bg }: { p: P; bg: string }) => (
  <PropRow $bg={bg}>
    <PropName $bold={p.b}>
      {p.x && <PropChevron width="12" height="12" viewBox="0 0 12 12"><path d="M4 1.5L8.5 6 4 10.5" fill="none" stroke="#777" strokeWidth="1.2" /></PropChevron>}
      {p.n}
    </PropName>
    <PropValue>
      {p.c !== undefined && (
        <Check $on={p.c}>{p.c && <svg width="10" height="10" viewBox="0 0 10 10"><path d="M1.5 5.5l2.5 2.5 4.5-6" fill="none" stroke="#fff" /></svg>}</Check>
      )}
      {p.k === "font" && <svg width="16" height="20" viewBox="0 0 16 20"><path d="M4 18L8 2l4 16M5.5 12h5" fill="none" stroke="#333" strokeWidth="1.3" /></svg>}
      {p.k === "cursor" && <svg width="16" height="20" viewBox="0 0 16 20"><path d="M5 2h6M8 2v16M5 18h6" fill="none" stroke="#333" strokeWidth="1.4" /></svg>}
      {p.v}
    </PropValue>
  </PropRow>
);

const objects: [string, string, string, boolean?, boolean?][] = [
  ["labelUname", "o_label", "QLabel", true],
  ["labelUpass", "o_label", "QLabel"],
  ["lineEditUname", "lineedit", "QLineEdit", true],
  ["lineEditUpass", "lineedit", "QLineEdit", false, true],
  ["loginBtn", "push", "QPushButton", true],
];

const topTools = ["t_widget", "t_signal", "t_buddy", "t_tab", "t_h", "t_v", "t_hs", "t_vs", "t_form", "t_grid", "t_break", "t_adjust"];
const handles: [number, number][] = [[209, 188], [263, 188], [320, 188], [209, 200], [320, 200], [209, 212], [263, 212], [320, 212]];

const RedArrow = ({ d, head, w }: { d: string; head: string; w: number }) => (
  <g><path d={d} stroke={RED} strokeWidth={w} fill="none" /><polygon points={head} fill={RED} /></g>
);

export default function App() {
  return (
    <Root>
      <Global />
      <TopBar>
        <svg width="14" height="16" viewBox="0 0 14 16" style={{ flex: "none" }}><rect x="1" y="7" width="9" height="8" fill="#5e6062" /><path d="M3 7V4c0-3 6-3 6 0" stroke="#5e6062" strokeWidth="1.6" fill="none" /></svg>
        <TopGap $w={8} />
        <svg width="10" height="16" viewBox="0 0 10 16" style={{ flex: "none" }}><path d="M0 1h7l3 3v11H0z" fill="#ddd" /></svg>
        <Title>mywidget.ui*</Title>
        <TopGap $w={104} />
        <DropCaret />
        <TopGap $w={6} />
        <TopDivider />
        <TopGap $w={5} />
        <svg width="12" height="12" viewBox="0 0 12 12" style={{ flex: "none" }}><path d="M1 1l10 10M11 1L1 11" stroke="#bbb" /></svg>
        <TopGap $w={6} />
        <TopDivider />
        <TopGap $w={0} />
        {topTools.map((t) => <ToolSlot key={t}><Ic n={t} s={21} /></ToolSlot>)}
      </TopBar>
      <Main>
        <Sidebar>
          <ModeTab>
            <svg width="22" height="22" viewBox="0 0 22 22"><g fill="#c8c8c8">{[1, 8, 15].map((x) => [1, 8, 15].map((y) => <rect key={x + "-" + y} x={x} y={y} width="6" height="6" />))}</g></svg>
            <ModeLabel>欢迎</ModeLabel>
          </ModeTab>
          <ModeTab>
            <svg width="22" height="22" viewBox="0 0 22 22"><rect x="1" y="1" width="20" height="20" fill="#c8c8c8" /><path d="M5 6h12M5 9h12M5 12h12M5 15h8" stroke="#333" /></svg>
            <ModeLabel>编辑</ModeLabel>
          </ModeTab>
          <ModeTab $on>
            <svg width="22" height="22" viewBox="0 0 22 22"><path d="M1 21l3-8L15 3l4 3L8 18z" fill="#c8701c" /></svg>
            <ModeLabel>设计</ModeLabel>
          </ModeTab>
          <ModeTab>
            <svg width="22" height="22" viewBox="0 0 22 22"><g fill="#c8c8c8"><ellipse cx="11" cy="13" rx="7" ry="8" /><circle cx="11" cy="4" r="3.5" /><path d="M1 8l3 2M21 8l-3 2M0 14h3M22 14h-3M2 20l3-2M20 20l-3-2" stroke="#c8c8c8" strokeWidth="1.5" /></g><path d="M11 6v15" stroke="#404244" strokeWidth="1.5" /></svg>
            <ModeLabel $mono>Debug</ModeLabel>
          </ModeTab>
          <ModeTab>
            <Wrench size={22} color="#c8c8c8" fill="#c8c8c8" />
            <ModeLabel>项目</ModeLabel>
          </ModeTab>
          <ModeTab>
            <svg width="22" height="22" viewBox="0 0 22 22"><circle cx="11" cy="11" r="10.5" fill="#c8c8c8" /><path d="M7.5 8c0-5 7.5-4.5 7.5 0 0 3-3.5 3-3.5 6" fill="none" stroke="#404244" strokeWidth="2.4" /><rect x="10" y="15.5" width="2.8" height="2.8" fill="#404244" /></svg>
            <ModeLabel>帮助</ModeLabel>
          </ModeTab>
          <SideBottom>
            <KitName>day···001</KitName>
            <KitMonitor>
              <svg width="26" height="25" viewBox="0 0 26 25"><rect x="1.5" y="1.5" width="23" height="16" rx="1" fill="#555" stroke="#bdbdbd" strokeWidth="2" /><path d="M9 19h8l2 5H7z" fill="#bdbdbd" /></svg>
              <KitCaret />
            </KitMonitor>
            <ModeLabel $mono>Debug</ModeLabel>
            <RunBtn $top={20}>
              <svg width="20" height="24" viewBox="0 0 20 24"><path d="M1 1l18 11L1 23z" fill="#84b562" /></svg>
            </RunBtn>
            <RunBtn $top={15}>
              <svg width="22" height="24" viewBox="0 0 22 24"><path d="M1 1l18 11L1 23z" fill="#84b562" /><ellipse cx="15" cy="17" rx="5" ry="6" fill="#c8c8c8" stroke="#404244" /></svg>
            </RunBtn>
            <RunBtn $top={14}>
              <svg width="24" height="24" viewBox="0 0 24 24"><path d="M2 24L13 9l3 2L5 26z" fill="#c8701c" /><path d="M10 7l6-6 7 6-3 3-3-2-2 3z" fill="#a8a8a8" /></svg>
            </RunBtn>
          </SideBottom>
        </Sidebar>
        <LeftPanel>
          <LeftFilterRow><FilterInput>Filter</FilterInput></LeftFilterRow>
          <BoxBody>
            <BoxList>
              {box.map(([cat, items]) => (
                <React.Fragment key={cat}>
                  <Category>
                    <CatChevron width="12" height="12" viewBox="0 0 12 12"><path d="M1.5 4l4.5 4.5L10.5 4" fill="none" stroke="#222" strokeWidth="1.3" /></CatChevron>
                    {cat}
                  </Category>
                  {items.map(([ic, label]) => <Item key={label}><Ic n={ic} />{label}</Item>)}
                </React.Fragment>
              ))}
            </BoxList>
            <ScrollTrack><ScrollThumb $top={22} $h={1002} /></ScrollTrack>
          </BoxBody>
        </LeftPanel>
        <Splitter $w={1} />
        <Center>
          <Canvas>
            <Form>
              <FormLabel $x={110} $y={107}>用户名:</FormLabel>
              <LineEdit $x={211} $y={111} />
              <FormLabel $x={110} $y={196}>密　码:</FormLabel>
              <LineEdit $x={211} $y={191} />
              {handles.map(([x, y]) => <Handle key={x + "-" + y} $x={x} $y={y} />)}
              <FormButton>登录</FormButton>
            </Form>
          </Canvas>
          <ActionBar>
            <ActionTools>
              {["a_new", "a_copy", "a_open", "a_del", "a_wrench"].map((t) => <Ic key={t} n={t} />)}
            </ActionTools>
            <FilterInput $w={341}>Filter</FilterInput>
          </ActionBar>
          <ColumnHeader>
            {["名称", "使用", "文本", "快捷键", "可选的", "工具提示"].map((t) => <ColHead key={t}>{t}</ColHead>)}
          </ColumnHeader>
          <ActionBody />
          <Tabs>
            <TabItem $on $w={148}>Action Editor</TabItem>
            <TabItem $w={216}>Signals _Slots Ed···</TabItem>
          </Tabs>
        </Center>
        <Splitter $w={2} />
        <Right>
          <ObjectArea>
            <ObjectTree>
              <TreeHead><TreeHeadCell>对象</TreeHeadCell><TreeHeadCell>类</TreeHeadCell></TreeHead>
              <TreeRow>
                <TreeIndent><Chevron open /> <Ic n="o_form" s={20} /></TreeIndent>
                <TreeName>MyWidget</TreeName>
                <TreeClass><Ic n="widget" s={17} />QWidget</TreeClass>
              </TreeRow>
              {objects.map(([name, ic, cls, alt, sel]) => (
                <TreeRow key={name} $alt={alt}>
                  <div />
                  <TreeName $sel={sel}>{name}</TreeName>
                  <TreeClass $sel={sel}><Ic n={ic} s={17} />{cls}</TreeClass>
                </TreeRow>
              ))}
            </ObjectTree>
            <ScrollTrack><DownArrow /></ScrollTrack>
          </ObjectArea>
          <FilterRow>
            <FilterInput>Filter</FilterInput>
            <FilterTools><Ic n="p_plus" /><Ic n="p_minus" /><Ic n="a_wrench" /></FilterTools>
          </FilterRow>
          <ObjTitle>lineEditUpass : QLineEdit</ObjTitle>
          <PropArea>
            <PropTable>
              <PropHead><PropHeadCell>属性</PropHeadCell><PropHeadCell>值</PropHeadCell></PropHead>
              {baseProps.map((p, i) => <Prop key={p.n} p={p} bg={i % 2 ? "#ffffbf" : "#ffffdc"} />)}
              <GroupRow>
                <PropChevron width="12" height="12" viewBox="0 0 12 12" style={{ top: 5, left: 1 }}><path d="M1.5 4l4.5 4.5L10.5 4" fill="none" stroke="#fff" strokeWidth="1.2" /></PropChevron>
                QLineEdit
              </GroupRow>
              {editProps.map((p, i) => <Prop key={p.n} p={p} bg={i % 2 ? "#dfffdf" : "#bfffbf"} />)}
            </PropTable>
            <ScrollTrack><ScrollThumb $top={192} $h={620} /></ScrollTrack>
          </PropArea>
        </Right>
      </Main>
      <BottomStrip />

      <RedFrame />
      <Overlay width="2558" height="1304" viewBox="0 0 2558 1304">
        <RedArrow w={6} d="M107 8L46 146" head="39,157 39,128 46,136 61,138" />
        <RedArrow w={8} d="M1297 515L832 276" head="817,264 846,266 838,273 836,287" />
        <RedArrow w={7} d="M1307 987L812 280" head="803,263 826,279 815,281 808,292" />
      </Overlay>
      <Tip>styleSheet (QString)</Tip>
      <Note $x={1352} $y={209}>对象名</Note>
      <Note $x={1550} $y={216}>组件所属类以及包含关系</Note>
      <Note $x={1352} $y={271}>会被封装到  <NoteLatin>ui</NoteLatin></Note>
      <Note $x={1352} $y={303}>访问方式  <NoteLatin>ui-&gt;loginBtn</NoteLatin></Note>
      <Note $x={1597} $y={408}>属性面板</Note>
      <Note $x={1055} $y={353}>基类的属性</Note>
      <Note $x={933} $y={708}>具体子类的属性</Note>
      <Note $x={474} $y={748}>常见组件列表</Note>
      <Note $x={559} $y={1127}>动作编辑器【不建议】</Note>
    </Root>
  );
}
